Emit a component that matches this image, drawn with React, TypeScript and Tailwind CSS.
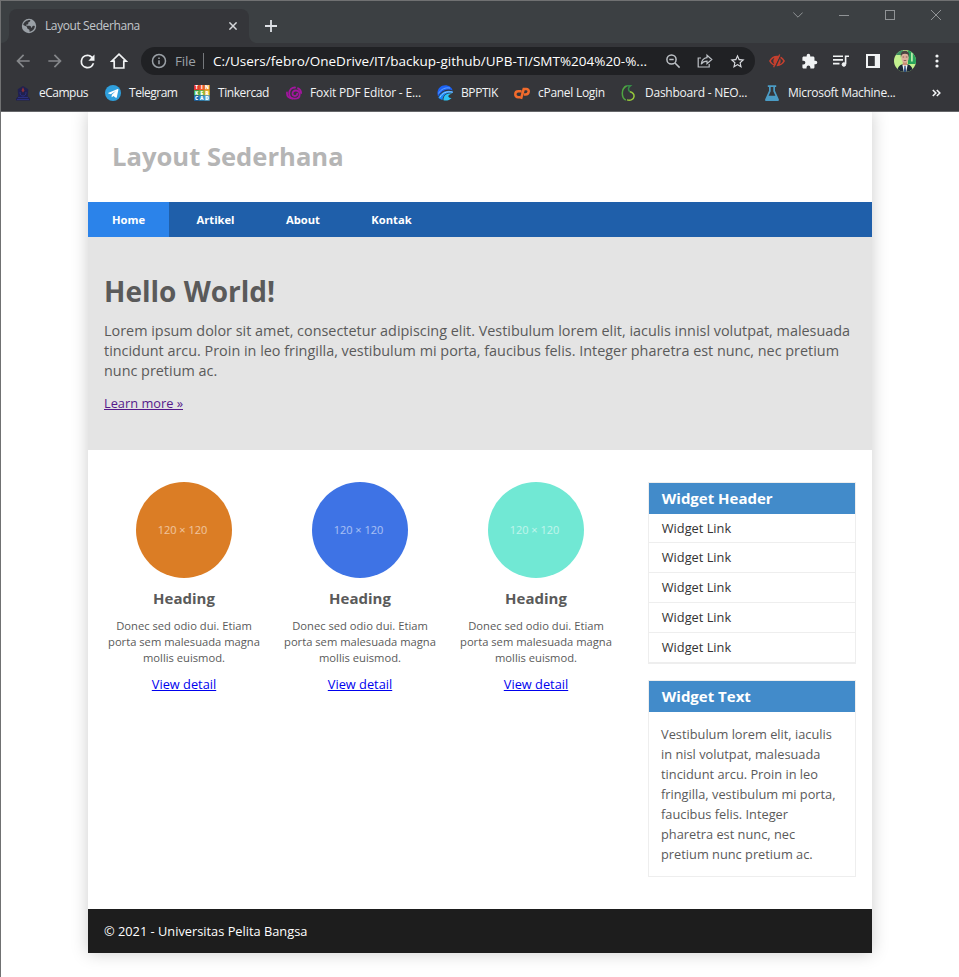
import type { ReactNode } from 'react';

function Slot({ children, className = '' }: { children: ReactNode; className?: string }) {
  return <span className={`flex w-8 shrink-0 items-center justify-center ${className}`}>{children}</span>;
}

function Material({ d, size = 18, className = '' }: { d: string; size?: number; className?: string }) {
  return (
    <svg viewBox="0 0 24 24" width={size} height={size} fill="currentColor" className={`shrink-0 ${className}`}>
      <path d={d} />
    </svg>
  );
}

function TabStrip() {
  return (
    <div className="flex h-[42px] bg-[#3c4043] pl-2">
      <div className="relative mt-2 flex h-[34px] w-60 items-center rounded-t-lg bg-[#35363a] pl-3">
        <svg viewBox="0 0 8 8" className="absolute bottom-0 -left-2 size-2 text-[#35363a]">
          <path d="M8 0v8H0a8 8 0 0 0 8-8z" fill="currentColor" />
        </svg>
        <svg viewBox="0 0 8 8" className="absolute -right-2 bottom-0 size-2 text-[#35363a]">
          <path d="M0 0v8h8a8 8 0 0 1-8-8z" fill="currentColor" />
        </svg>
        <svg viewBox="0 0 16 16" className="size-4 shrink-0">
          <circle cx="8" cy="8" r="7.2" fill="#9aa0a6" />
          <path
            d="M9.2 2.1c.3 1.3-.3 1.900-1.500 2.100-.6.1-.6.8-.4 1.300.3.700-.8.900-1.600 1C5 6.700 5 7.700 5.700 7.700h2.800c1.300 0 1.500.8 1.500 1.700 0 .7 1.300.3 1.300-.8 0-.9 1.200-1 2.500-.5.1 2.800-2.300 5.500-5.300 5.700v-1.600c0-.8-.8-1.100-1.500-1.300-1-.3-1-1.500-1-2.200L2.200 7C2.700 4.200 5.500 2 9.200 2.100z"
            fill="#35363a"
          />
        </svg>
        <span className="ml-2 w-[180px] whitespace-nowrap text-xs tracking-[-0.4px] text-[#c3c7cb]">
          Layout Sederhana
        </span>
        <svg viewBox="0 0 8 8" className="ml-1 size-2 shrink-0" stroke="#d5d7da" strokeWidth="1.500">
          <path d="M.4.4l7.200 7.200M7.600.4L.4 7.600" />
        </svg>
      </div>
      <svg viewBox="0 0 12 12" className="mt-[19px] ml-4 size-3" stroke="#dee1e6" strokeWidth="1.800">
        <path d="M6 0v12M0 6h12" />
      </svg>
      <div className="ml-auto flex h-7 text-[#909396]">
        <span className="flex w-[46px] items-center justify-center">
          <svg viewBox="0 0 10 6" className="h-1.5 w-2.5" fill="none" stroke="currentColor">
            <path d="M.3.5L5 5.200 9.700.5" />
          </svg>
        </span>
        <span className="flex w-[46px] items-center justify-center">
          <span className="mt-px h-px w-2.5 bg-current" />
        </span>
        <span className="flex w-[46px] items-center justify-center">
          <span className="size-2.5 border border-current" />
        </span>
        <span className="flex w-[46px] items-center justify-center">
          <svg viewBox="0 0 10 10" className="size-2.5" stroke="currentColor">
            <path d="M0 0l10 10M10 0L0 10" />
          </svg>
        </span>
      </div>
    </div>
  );
}

function AddressBar() {
  return (
    <div className="flex h-9 items-center bg-[#35363a] pl-1.5">
      <Slot className="text-[#85878a]">
        <Material size={20} d="M20 11H7.830l5.590-5.590L12 4l-8 8 8 8 1.410-1.410L7.830 13H20v-2z" />
      </Slot>
      <Slot className="text-[#85878a]">
        <Material size={20} d="M12 4l-1.410 1.410L16.170 11H4v2h12.170l-5.580 5.590L12 20l8-8z" />
      </Slot>
      <Slot className="text-[#f1f3f4]">
        <Material
          size={21}
          d="M17.650 6.350A7.958 7.958 0 0 0 12 4a8 8 0 1 0 7.730 10h-2.080A6 6 0 1 1 12 6c1.660 0 3.140.690 4.220 1.780L13 11h7V4l-2.350 2.350z"
        />
      </Slot>
      <Slot className="text-[#f1f3f4]">
        <svg viewBox="0 0 18 18" className="size-[18px]" fill="none" stroke="currentColor" strokeWidth="1.700">
          <path d="M1.800 9.200h2.400V16h9.600V9.200h2.400L9 2.200z" />
        </svg>
      </Slot>
      <div className="ml-1.5 flex h-7 w-[614px] items-center rounded-full bg-[#202124] pr-0.5 pl-2.5">
        <svg viewBox="0 0 16 16" className="size-4 shrink-0" fill="none" stroke="#9aa0a6" strokeWidth="1.500">
          <circle cx="8" cy="8" r="6.500" />
          <path d="M8 7.200v4M8 4.500v1.500" />
        </svg>
        <span className="ml-2 w-7 text-[13.5px] tracking-[-0.2px] text-[#9aa0a6]">File</span>
        <span className="h-4 w-px bg-[#75787c]" />
        <span className="ml-[9px] w-[444px] whitespace-nowrap text-[13.5px] text-white">
          C:/Users/febro/OneDrive/IT/backup-github/UPB-TI/SMT%204%20-%...
        </span>
        <Slot className="text-[#bdc1c6]">
          <svg viewBox="0 0 16 16" className="size-4" fill="none" stroke="currentColor" strokeWidth="1.500">
            <circle cx="6.500" cy="6.500" r="4.600" />
            <path d="M10 10l4.600 4.600M4.300 6.500h4.400" />
          </svg>
        </Slot>
        <Slot className="text-[#bdc1c6]">
          <svg viewBox="0 0 16 16" className="size-4" fill="none" stroke="currentColor" strokeWidth="1.200">
            <path d="M4 5H1.200v9h11v-3" />
            <path d="M10 2.200l4.800 4.300L10 10.700V8.200c-2.700 0-4.400.9-5.800 3C4.600 8 6.300 5.200 10 4.700z" />
          </svg>
        </Slot>
        <Slot className="text-[#dadce0]">
          <Material
            d="M22 9.240l-7.190-.620L12 2 9.190 8.630 2 9.240l5.460 4.730L5.820 21 12 17.270 18.180 21l-1.630-7.030L22 9.240zM12 15.400l-3.760 2.270 1-4.280-3.320-2.880 4.380-.380L12 6.100l1.710 4.040 4.380.380-3.320 2.880 1 4.280L12 15.400z"
            size={17}
          />
        </Slot>
      </div>
      <div className="ml-1.5 flex items-center text-[#f1f3f4]">
        <Slot>
          <svg viewBox="0 0 16 14" className="h-3.5 w-4">
            <path
              d="M0 7C1.800 3.700 4.600 1.800 8 1.800S14.200 3.700 16 7c-1.800 3.300-4.600 5.200-8 5.200S1.800 10.300 0 7zm1.900 0c1 1.800 2.200 2.800 3.600 3.300C3.900 8.100 3.900 5.900 5.500 3.700 4.100 4.200 2.900 5.200 1.900 7zm12.200 0c-1-1.800-2.200-2.800-3.600-3.300 1.600 2.200 1.600 4.400 0 6.600 1.400-.5 2.600-1.500 3.600-3.300z"
              fill="#c5402f"
              fillRule="evenodd"
            />
            <path d="M12 .8L6 13.600" stroke="#35363a" strokeWidth="1.400" />
            <path d="M10.700.5L4.600 13.300" stroke="#c5402f" strokeWidth="1.300" />
          </svg>
        </Slot>
        <Slot>
          <Material
            d="M20.500 11H19V7c0-1.100-.9-2-2-2h-4V3.500a2.500 2.500 0 0 0-5 0V5H4c-1.100 0-2 .9-2 2v3.800h1.500a2.700 2.700 0 0 1 0 5.400H2V20c0 1.100.9 2 2 2h3.800v-1.500a2.700 2.700 0 0 1 5.400 0V22H17c1.100 0 2-.9 2-2v-4h1.500a2.500 2.500 0 0 0 0-5z"
            size={17}
          />
        </Slot>
        <Slot>
          <svg viewBox="0 0 16 14" className="h-3.5 w-4" fill="none" stroke="currentColor" strokeWidth="1.600">
            <path d="M0 2.200h10M0 5.900h10M0 9.600h6.500M12.600 10V2.200H16" />
            <circle cx="10.900" cy="10.500" r="1.800" fill="currentColor" strokeWidth="1" />
          </svg>
        </Slot>
        <Slot>
          <svg viewBox="0 0 14 14" className="size-3.5">
            <path d="M0 0h14v14H0zM2 2v10h6.800V2z" fill="currentColor" fillRule="evenodd" />
          </svg>
        </Slot>
        <Slot>
          <svg viewBox="0 0 22 22" className="size-[22px] overflow-hidden rounded-full">
            <path d="M0 0h22v22H0z" fill="#c3f08f" />
            <path d="M14 0h8v14h-8z" fill="#27a35a" />
            <path d="M0 0h9v5H0z" fill="#3f8f62" />
            <path d="M17 2.500h1.800v9H17z" fill="#b6eaa8" />
            <path d="M3 22c.5-5.500 3.200-8 8-8s7.500 2.500 8 8z" fill="#1c2735" />
            <path d="M8.800 11h4.400v4L11 18l-2.200-3z" fill="#c98f76" />
            <path d="M8.300 14.500l2.700 1.300 2.700-1.300L12.200 22H9.800z" fill="#eef3f6" />
            <path d="M10.400 16h1.200l.5 6H9.900z" fill="#244879" />
            <ellipse cx="11" cy="7.500" rx="3.700" ry="5.300" fill="#dcb09d" />
            <path d="M6.900 7.500C6.400 3 7.800.8 11 .8S15.600 3 15.100 7.500c-.6-2.700-1.400-3.700-4.100-3.700s-3.500 1-4.100 3.700z" fill="#4c4542" />
            <path d="M8.600 7h1.600M11.800 7h1.600M9.700 10.500h2.600" stroke="#693f35" strokeWidth=".7" />
          </svg>
        </Slot>
        <Slot>
          <svg viewBox="0 0 4 14" className="h-3.5 w-1" fill="currentColor">
            <circle cx="2" cy="2" r="1.600" />
            <circle cx="2" cy="7" r="1.600" />
            <circle cx="2" cy="12" r="1.600" />
          </svg>
        </Slot>
      </div>
    </div>
  );
}

const tinkerTiles: [number, number, string, string][] = [
  [0, 0, '#e2362d', 'T'],
  [1, 0, '#f0592b', 'I'],
  [2, 0, '#f79429', 'N'],
  [0, 1, '#3fae49', 'K'],
  [1, 1, '#7cc142', 'E'],
  [2, 1, '#f7c52d', 'R'],
  [0, 2, '#1c6cb4', 'C'],
  [1, 2, '#2a93d1', 'A'],
  [2, 2, '#5bb8e8', 'D'],
];

function Bookmark({ width, tracking, label, children }: { width: string; tracking: string; label: string; children: ReactNode }) {
  return (
    <div className={`flex shrink-0 items-center gap-2 ${width}`}>
      <svg viewBox="0 0 16 16" className="size-4 shrink-0">
        {children}
      </svg>
      <span className={`whitespace-nowrap text-xs text-[#f1f3f4] ${tracking}`}>{label}</span>
    </div>
  );
}

function BookmarksBar() {
  return (
    <div className="flex h-8 items-center bg-[#35363a] pb-1 pl-3.5">
      <Bookmark width="w-[90px]" tracking="tracking-[-0.5px]" label="eCampus">
        <path d="M8 1l5.300 3.300-.6 7.200L15 13.500v2H1v-2l2.300-2-.6-7.200z" fill="#20204f" />
        <path d="M8 2.300L9.500 5.500 8 7.500 6.500 5.500z" fill="#8c3038" />
        <path d="M5 7c0 3 1.200 4 3 4s3-1 3-4M3 12.500h10M2 14.500h12" fill="none" stroke="#2b2f80" />
      </Bookmark>
      <Bookmark width="w-[89px]" tracking="tracking-[-0.48px]" label="Telegram">
        <circle cx="8" cy="8" r="8" fill="#2f9fdc" />
        <path d="M3 7.900l9.700-3.900c.5-.2.900.1.700.8l-1.600 7.500c-.1.600-.5.700-1 .4L8.400 10.900l-1.200 1.200c-.3.200-.6.200-.6-.3l.2-2 4-3.700-5 3.100-2.300-.7c-.5-.2-.5-.4-.5-.6z" fill="#fff" />
      </Bookmark>
      <Bookmark width="w-[92px]" tracking="tracking-[-0.42px]" label="Tinkercad">
        {tinkerTiles.map(([x, y, fill, letter]) => (
          <g key={letter}>
            <rect x={x * 5.2} y={y * 5.2} width="5.300" height="5.300" fill={fill} />
            <text x={x * 5.2 + 2.6} y={y * 5.2 + 4.3} textAnchor="middle" fontSize="4.800" fontWeight="800" fill="#fff">
              {letter}
            </text>
          </g>
        ))}
      </Bookmark>
      <Bookmark width="w-[151px]" tracking="tracking-[-0.18px]" label="Foxit PDF Editor - E...">
        <g fill="none" stroke="#a3159f" strokeWidth="1.800" strokeLinecap="round">
          <path d="M1 7.500c-.3 3.800 1.900 5.800 5.200 6" />
          <path d="M11.300 8.600c0 1.400-1 2.400-2.400 2.400S6.500 10 6.500 8.600c0-1.900 1.400-3.100 3.200-3.100 2.300 0 4 1.600 4 3.900 0 2.800-2.300 4.300-5.200 4.300-3.100 0-5.300-2-5.300-5C3.200 5 5.600 2.500 9 2.500" />
          <path d="M12 3.200c2 1 3.100 2.700 3.100 4.800" />
        </g>
      </Bookmark>
      <Bookmark width="w-[77px]" tracking="tracking-[-0.42px]" label="BPPTIK">
        <path d="M1 11.500C-1 5 3 .2 8.300.2c3.700 0 6.500 2.100 7.300 5.200C9.500 3.300 4.500 5.500 1 11.500z" fill="#1c62f5" />
        <path d="M1.500 8.500C4 3.900 8.500 2.300 13 3" fill="none" stroke="#74b4ff" strokeWidth=".8" />
        <path d="M1.300 12.600C3.800 7.400 8.800 4.300 15.700 6.300l.2 1.800C11 6.800 6.200 8.700 5.500 15 3.700 14.700 2.200 13.900 1.300 12.600z" fill="#1787f7" />
        <path d="M2.800 12.500C5 8 9.500 5.800 15.700 7.200" fill="none" stroke="#b5deff" strokeWidth=".8" />
        <path d="M6.500 15.300c-.3-4.700 3.200-7.500 8.700-6.500-3.300.6-4.500 2-3.600 3.300.7 1 2 1.100 3 .8-1.800 2-4.900 3.100-8.100 2.400z" fill="#2cc4f5" />
      </Bookmark>
      <Bookmark width="w-[107px]" tracking="tracking-[-0.28px]" label="cPanel Login">
        <path d="M7.500 6.200H4.300C2.500 6.200 1.300 7.600 1.300 9.300s1.200 2.900 3 2.900h1.900M7 13.800l2.700-9.700h2.700c1.500 0 2.500 1 2.300 2.500-.2 1.700-1.500 2.800-3.200 2.800H9.900" fill="none" stroke="#f26b2c" strokeWidth="2.500" />
      </Bookmark>
      <Bookmark width="w-[143px]" tracking="tracking-[-0.24px]" label="Dashboard - NEO...">
        <g fill="none" strokeWidth="1.500">
          <path d="M5.800.8C2.600 2.300 1.300 5 1.300 8.200s1.200 5.700 3.500 7" stroke="#4fa542" />
          <path d="M6 .8h3.300c-2.400 1.800-2.500 4.300-.3 6" stroke="#358b47" />
          <path d="M9 6.800c3 .9 4.300 2.500 4 4.800-.3 2.600-3.400 4.300-7 3.300" stroke="#98c93c" />
        </g>
      </Bookmark>
      <Bookmark width="w-[168px]" tracking="tracking-[-0.29px]" label="Microsoft Machine...">
        <path d="M3.800.2h8.400V2H11v3.800l3.800 8.400c.4 1-.1 1.800-1.100 1.800H2.300c-1 0-1.500-.8-1.100-1.800L5 5.800V2H3.800zM6.700 2v4.200L4.600 10.700h6.800L9.300 6.200V2z" fill="#4b9cc5" fillRule="evenodd" />
      </Bookmark>
      <svg viewBox="0 0 9 8" className="h-2 w-[9px]" fill="none" stroke="#f1f3f4" strokeWidth="1.600">
        <path d="M.8 1L3.800 4l-3 3M4.800 1l3 3-3 3" />
      </svg>
    </div>
  );
}

const navItems = [
  { label: 'Home', width: 'w-[81px] bg-[#2b83ea]' },
  { label: 'Artikel', width: 'w-[87px]' },
  { label: 'About', width: 'w-[82px]' },
  { label: 'Kontak', width: 'w-[89px]' },
];

const columns = ['bg-[#db7d25]', 'bg-[#3e73e5]', 'bg-[#71e8d4]'];

function Site() {
  return (
    <div className="mx-[87px] h-[841px] bg-white text-[12.8px] leading-5 text-[#5a5a5a] shadow-[0_0_16px_#cccccc]">
      <header className="h-[90px] px-6 pt-[25px]">
        <h1 className="text-[25.6px] leading-10 font-bold text-[#b5b5b5]">Layout Sederhana</h1>
      </header>
      <nav className="flex h-[35px] gap-[3px] bg-[#1f5faa] text-[11.2px] font-bold text-white">
        {navItems.map((item) => (
          <a key={item.label} className={`flex items-center justify-center ${item.width}`}>
            {item.label}
          </a>
        ))}
      </nav>
      <section className="h-[213px] bg-[#e4e4e4] px-4 pt-[34px]">
        <h1 className="text-[28px] leading-10 font-bold">Hello World!</h1>
        <p className="mt-2.5 text-[14.4px] leading-5">
          Lorem ipsum dolor sit amet, consectetur adipiscing elit. Vestibulum lorem elit, iaculis innisl volutpat,
          malesuada tincidunt arcu. Proin in leo fringilla, vestibulum mi porta, faucibus felis. Integer pharetra est
          nunc, nec pretium nunc pretium ac.
        </p>
        <a className="mt-3 block w-fit text-[#551a8b] underline">Learn more »</a>
      </section>
      <div className="flex h-[459px] px-2 pt-8">
        <main className="flex">
          {columns.map((color) => (
            <article key={color} className="flex w-44 flex-col items-center text-center">
              <div className={`flex size-24 items-center justify-center rounded-full pr-[3px] ${color}`}>
                <span className="text-[11px] text-white/55">120 × 120</span>
              </div>
              <h3 className="mt-2.5 text-[15px] leading-5 font-bold">Heading</h3>
              <p className="mt-2.5 w-40 text-[11.2px] leading-4">
                Donec sed odio dui. Etiam porta sem malesuada magna mollis euismod.
              </p>
              <a className="mt-2 text-[#0000ee] underline">View detail</a>
            </article>
          ))}
        </main>
        <aside className="ml-6 w-52">
          <div className="border border-[#eeeeee]">
            <h3 className="h-[31px] bg-[#428bca] pl-[12.8px] text-[15px] leading-[31px] font-bold text-white">
              Widget Header
            </h3>
            <ul className="text-[#333333]">
              <li className="h-[29px] border-b border-[#eeeeee] pl-[12.8px] leading-7">Widget Link</li>
              {[2, 3, 4, 5].map((row) => (
                <li key={row} className="h-[30px] border-b border-[#eeeeee] pl-[12.8px] leading-7">
                  Widget Link
                </li>
              ))}
            </ul>
          </div>
          <div className="mt-4 border border-[#eeeeee]">
            <h3 className="h-[31px] bg-[#428bca] pl-[12.8px] text-[15px] leading-[31px] font-bold text-white">
              Widget Text
            </h3>
            <p className="p-3">
              Vestibulum lorem elit, iaculis in nisl volutpat, malesuada tincidunt arcu. Proin in leo fringilla,
              vestibulum mi porta, faucibus felis. Integer pharetra est nunc, nec pretium nunc pretium ac.
            </p>
          </div>
        </aside>
      </div>
      <footer className="flex h-11 items-center bg-[#1d1d1d] px-4 text-white">© 2021 - Universitas Pelita Bangsa</footer>
    </div>
  );
}

export default function App() {
  return (
    <div className="h-[977px] w-[959px] overflow-hidden border-t border-l border-[#707172] bg-white font-['Open_Sans','Noto_Sans',sans-serif]">
      <TabStrip />
      <AddressBar />
      <BookmarksBar />
      <div className="h-[866px] overflow-hidden border-t border-[#66676a]">
        <Site />
      </div>
    </div>
  );
}
